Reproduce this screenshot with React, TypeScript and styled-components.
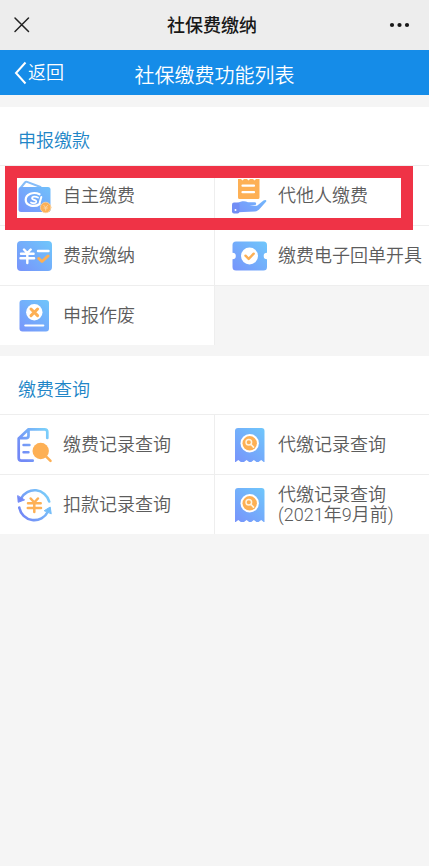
import React from "react";
import styled, { createGlobalStyle } from "styled-components";

const GlobalStyle = createGlobalStyle`
  *, *::before, *::after { box-sizing: border-box; }
  body {
    margin: 0;
    background: #f5f5f5;
    color: #5c5c5c;
    font-family: Roboto, "Noto Sans CJK SC", sans-serif;
    font-size: 18px;
    font-weight: 350;
    line-height: 20px;
  }
  button { font: inherit; color: inherit; background: none; border: 0; padding: 0; cursor: pointer; }
  h1, h2, p { margin: 0; font-weight: inherit; font-size: inherit; }
  svg { display: block; flex: none; }
`;

const WindowBar = styled.header`
  display: grid;
  grid-template-columns: 1fr auto 1fr;
  align-items: center;
  height: 50px;
  padding: 0 18px 0 13px;
  background: #ededed;
  color: #181818;
`;

const WindowTitle = styled.p`
  padding-top: 2px;
  font-weight: 500;
`;

const IconButton = styled.button<{ $end?: boolean }>`
  justify-self: ${(p) => (p.$end ? "end" : "start")};
`;

const NavBar = styled.nav`
  display: grid;
  grid-template-columns: 1fr auto 1fr;
  align-items: center;
  height: 45px;
  padding: 0 14px;
  background: #158ce8;
  color: #fff;
`;

const BackButton = styled.button`
  display: flex;
  align-items: center;
  justify-self: start;
  gap: 1px;
`;

const NavTitle = styled.h1`
  padding-top: 6px;
  font-size: 20px;
  line-height: 24px;
`;

const Content = styled.main`
  display: flex;
  flex-direction: column;
  gap: 11px;
  padding-top: 12px;
`;

const Section = styled.section`
  background: #fff;
`;

const SectionTitle = styled.h2`
  padding: 24px 18px 14px;
  border-bottom: 1px solid #eee;
  color: #2085c7;
`;

const Tiles = styled.div`
  position: relative;
  display: grid;
  grid-template-columns: repeat(2, minmax(0, 1fr));
  gap: 1px;
  background: #eee;
`;

const Tile = styled.a`
  display: flex;
  align-items: center;
  gap: 10px;
  min-height: 59px;
  padding-left: 17px;
  background: #fff;
  color: inherit;
  text-decoration: none;
`;

const TileLabel = styled.span`
  white-space: pre-line;
`;

const EmptyTile = styled.div`
  background: #f5f5f5;
`;

const Highlight = styled.div`
  position: absolute;
  top: 0;
  left: 5px;
  right: 16px;
  height: 64px;
  border: 12px solid #ef3346;
  pointer-events: none;
`;

const SharedDefs = styled.svg`
  position: absolute;
`;

const BLUE = "url(#blue)";
const ORANGE = "#fdb055";

const Gradients = () => (
  <SharedDefs width="0" height="0" aria-hidden="true">
    <defs>
      <linearGradient id="blue" gradientUnits="userSpaceOnUse" x1="32" y1="3" x2="4" y2="34">
        <stop offset="0" stopColor="#70c5fb" />
        <stop offset="1" stopColor="#7795fb" />
      </linearGradient>
      <linearGradient id="line" gradientUnits="userSpaceOnUse" x1="33" y1="8" x2="4" y2="26">
        <stop offset="0" stopColor="#7bd0fa" />
        <stop offset="1" stopColor="#7289f6" />
      </linearGradient>
    </defs>
  </SharedDefs>
);

const Glyph = ({ children }: { children: React.ReactNode }) => (
  <svg width="36" height="36" viewBox="0 0 36 36" fill="none" strokeLinecap="round" strokeLinejoin="round" aria-hidden="true">
    {children}
  </svg>
);

const WalletIcon = () => (
  <Glyph>
    <path d="M3.500 10 8 4.500q.8-1 2-.6L23.500 9" stroke="#86bdf8" strokeWidth="2" />
    <rect x="1.500" y="9" width="32" height="25" rx="2.500" fill={BLUE} />
    <path d="M22.500 16.300C16.500 13.200 8.700 16.200 8.700 21.800c0 6.200 9 7.800 14 4.200" stroke="#fff" strokeWidth="2.200" />
    <path d="M21 19.500c-3-1.600-6-.9-6 .8 0 2 4.800 1.400 4.200 3.700-.4 1.400-3 1.700-5.200.5" stroke="#fff" strokeWidth="1.800" />
    <path d="M24.300 19 22.700 24.800" stroke="#fff" strokeWidth="2" />
    <circle cx="28.700" cy="29.500" r="5.300" fill={ORANGE} stroke="#fbd6a4" strokeWidth=".8" />
    <path d="m26.900 27.500 1.800 2 1.800-2M28.700 29.500v2.800M27 30h3.400" stroke="#fbd9ab" strokeWidth=".9" />
  </Glyph>
);

const HandBillIcon = () => (
  <Glyph>
    <path d="M6 1h3l1.500 1.600L12 1h3l1.500 1.600L18 1h3l1.500 1.600L24 1h3.500v18.500q0 1.500-1.500 1.500H7.500Q6 21 6 19.500Z" fill={ORANGE} />
    <path d="M10.500 7.700H22M10.500 14.200H22" stroke="#fff" strokeWidth="2.200" />
    <path d="M5 25c4.500-2 8-2.200 11-.7h6.500c2.200 0 2.200 2.600 0 2.800l-5 .5 7.500.2 6.500-5.300c1.700-1.200 3.600-.3 2.500 1.300L28 30.500c-1.500 1.900-3 2.700-5 2.900L6 34.300Z" fill={BLUE} />
    <rect x="0" y="24.500" width="7.500" height="11" rx="2" fill="#718df5" />
    <circle cx="3.500" cy="32" r="1" fill="#fff" />
  </Glyph>
);

const PayCardIcon = () => (
  <Glyph>
    <rect x="0" y="3" width="35" height="30" rx="4" fill={BLUE} />
    <path d="m7 11.500 3.300 3.500 3.400-3.500M4 15.700h12.600M3.500 20.300h13.600M10.300 15.500V25" stroke="#fff" strokeWidth="2.400" />
    <path d="M21 13h10.500" stroke="#fff" strokeWidth="2.400" />
    <path d="m21.800 20.500 3.200 3 6-5.500" stroke={ORANGE} strokeWidth="3" />
  </Glyph>
);

const TicketIcon = () => (
  <Glyph>
    <path d="M4 3.500h27.500Q35 3.500 35 7v7.700a3.300 3.300 0 0 0 0 6.600V29q0 3.500-3.500 3.500H4Q.5 32.500.5 29v-7.700a3.300 3.300 0 0 0 0-6.600V7Q.5 3.500 4 3.500Z" fill={BLUE} />
    <circle cx="17.500" cy="18" r="8.500" fill="#fff" />
    <path d="m13.500 17.700 3.200 3.200 5-5.200" stroke={ORANGE} strokeWidth="2.400" />
  </Glyph>
);

const VoidIcon = () => (
  <Glyph>
    <rect x="2.500" y="2" width="29.500" height="31.500" rx="3" fill={BLUE} />
    <circle cx="17.300" cy="14.300" r="8.200" fill="#fff" />
    <path d="m14 11 6.600 6.600M20.600 11 14 17.600" stroke={ORANGE} strokeWidth="3" />
    <path d="M8.300 27.500h18" stroke="#fff" strokeWidth="2.200" />
  </Glyph>
);

const RecordSearchIcon = () => (
  <Glyph>
    <path d="M30.300 11V5q0-2.700-2.700-2.700H11.500L1.700 11.500V31q0 2.700 2.700 2.700h11.300M11.500 2.500v6.300q0 2.400-2.400 2.400H2" stroke="url(#line)" strokeWidth="2.700" />
    <path d="M6.500 18h6M6.500 25.300h5" stroke="url(#line)" strokeWidth="2.400" />
    <circle cx="23.700" cy="24" r="8.200" fill={ORANGE} />
    <path d="m29 29.300 4.500 4.500" stroke={ORANGE} strokeWidth="2.600" />
  </Glyph>
);

const DeductionIcon = () => (
  <Glyph>
    <path d="M4 11.500A15.200 15.200 0 0 1 32.200 14.500M2.300 20.500A15.200 15.200 0 0 0 31 24.500" stroke="url(#line)" strokeWidth="2.600" />
    <path d="M.7 9 1.200 15.300l6-2.300Z" fill="#7289f6" stroke="#7289f6" />
    <path d="M34.200 26.500 33.200 20 27.500 23.500Z" fill="#75bdf8" stroke="#75bdf8" />
    <path d="m13.700 11.500 3.600 4 3.600-4M11 16.200h12.700M10.800 21h13.200M17.300 16v9" stroke={ORANGE} strokeWidth="2.500" />
  </Glyph>
);

const ReceiptSearchIcon = () => (
  <Glyph>
    <path d="M6 1H29.500q3 0 3 3v31h-.8l-2.500-2-2.600 2h-2.200l-2.500-2-2.600 2h-2.200l-2.500-2-2.600 2H8.800l-2.500-2L3.700 35H3V4q0-3 3-3Z" fill={BLUE} />
    <circle cx="17.700" cy="16.300" r="9.200" fill="#fff" />
    <circle cx="17.700" cy="16.300" r="7.200" fill={ORANGE} />
    <circle cx="16.800" cy="15.200" r="2.800" stroke="#fff3df" strokeWidth="1.500" />
    <path d="m19 17.500 2.500 2.700" stroke="#fff3df" strokeWidth="1.700" />
  </Glyph>
);

type Item = { label: string; Icon: React.ComponentType };

const paymentItems: Item[] = [
  { label: "自主缴费", Icon: WalletIcon },
  { label: "代他人缴费", Icon: HandBillIcon },
  { label: "费款缴纳", Icon: PayCardIcon },
  { label: "缴费电子回单开具", Icon: TicketIcon },
  { label: "申报作废", Icon: VoidIcon },
];

const queryItems: Item[] = [
  { label: "缴费记录查询", Icon: RecordSearchIcon },
  { label: "代缴记录查询", Icon: ReceiptSearchIcon },
  { label: "扣款记录查询", Icon: DeductionIcon },
  { label: "代缴记录查询\n(2021年9月前)", Icon: ReceiptSearchIcon },
];

const FunctionSection = ({ title, items, highlighted }: { title: string; items: Item[]; highlighted?: boolean }) => (
  <Section>
    <SectionTitle>{title}</SectionTitle>
    <Tiles>
      {items.map(({ label, Icon }) => (
        <Tile href="#" key={label}>
          <Icon />
          <TileLabel>{label}</TileLabel>
        </Tile>
      ))}
      {items.length % 2 === 1 && <EmptyTile />}
      {highlighted && <Highlight />}
    </Tiles>
  </Section>
);

export default function App() {
  return (
    <>
      <GlobalStyle />
      <Gradients />
      <WindowBar>
        <IconButton aria-label="关闭">
          <svg width="18" height="18" viewBox="0 0 18 18" stroke="#222" strokeWidth="1.500" strokeLinecap="round">
            <path d="m2 2 13.500 13.500M15.500 2 2 15.500" />
          </svg>
        </IconButton>
        <WindowTitle>社保费缴纳</WindowTitle>
        <IconButton $end aria-label="更多">
          <svg width="24" height="18" viewBox="0 0 24 18" fill="#181818">
            <circle cx="5" cy="9" r="2.100" />
            <circle cx="12.500" cy="9" r="2.100" />
            <circle cx="20" cy="9" r="2.100" />
          </svg>
        </IconButton>
      </WindowBar>
      <NavBar>
        <BackButton>
          <svg width="13" height="24" viewBox="0 0 13 24" fill="none" stroke="#fff" strokeWidth="2">
            <path d="M11.500 1.500 2 12l9.500 10.500" />
          </svg>
          返回
        </BackButton>
        <NavTitle>社保缴费功能列表</NavTitle>
      </NavBar>
      <Content>
        <FunctionSection title="申报缴款" items={paymentItems} highlighted />
        <FunctionSection title="缴费查询" items={queryItems} />
      </Content>
    </>
  );
}
